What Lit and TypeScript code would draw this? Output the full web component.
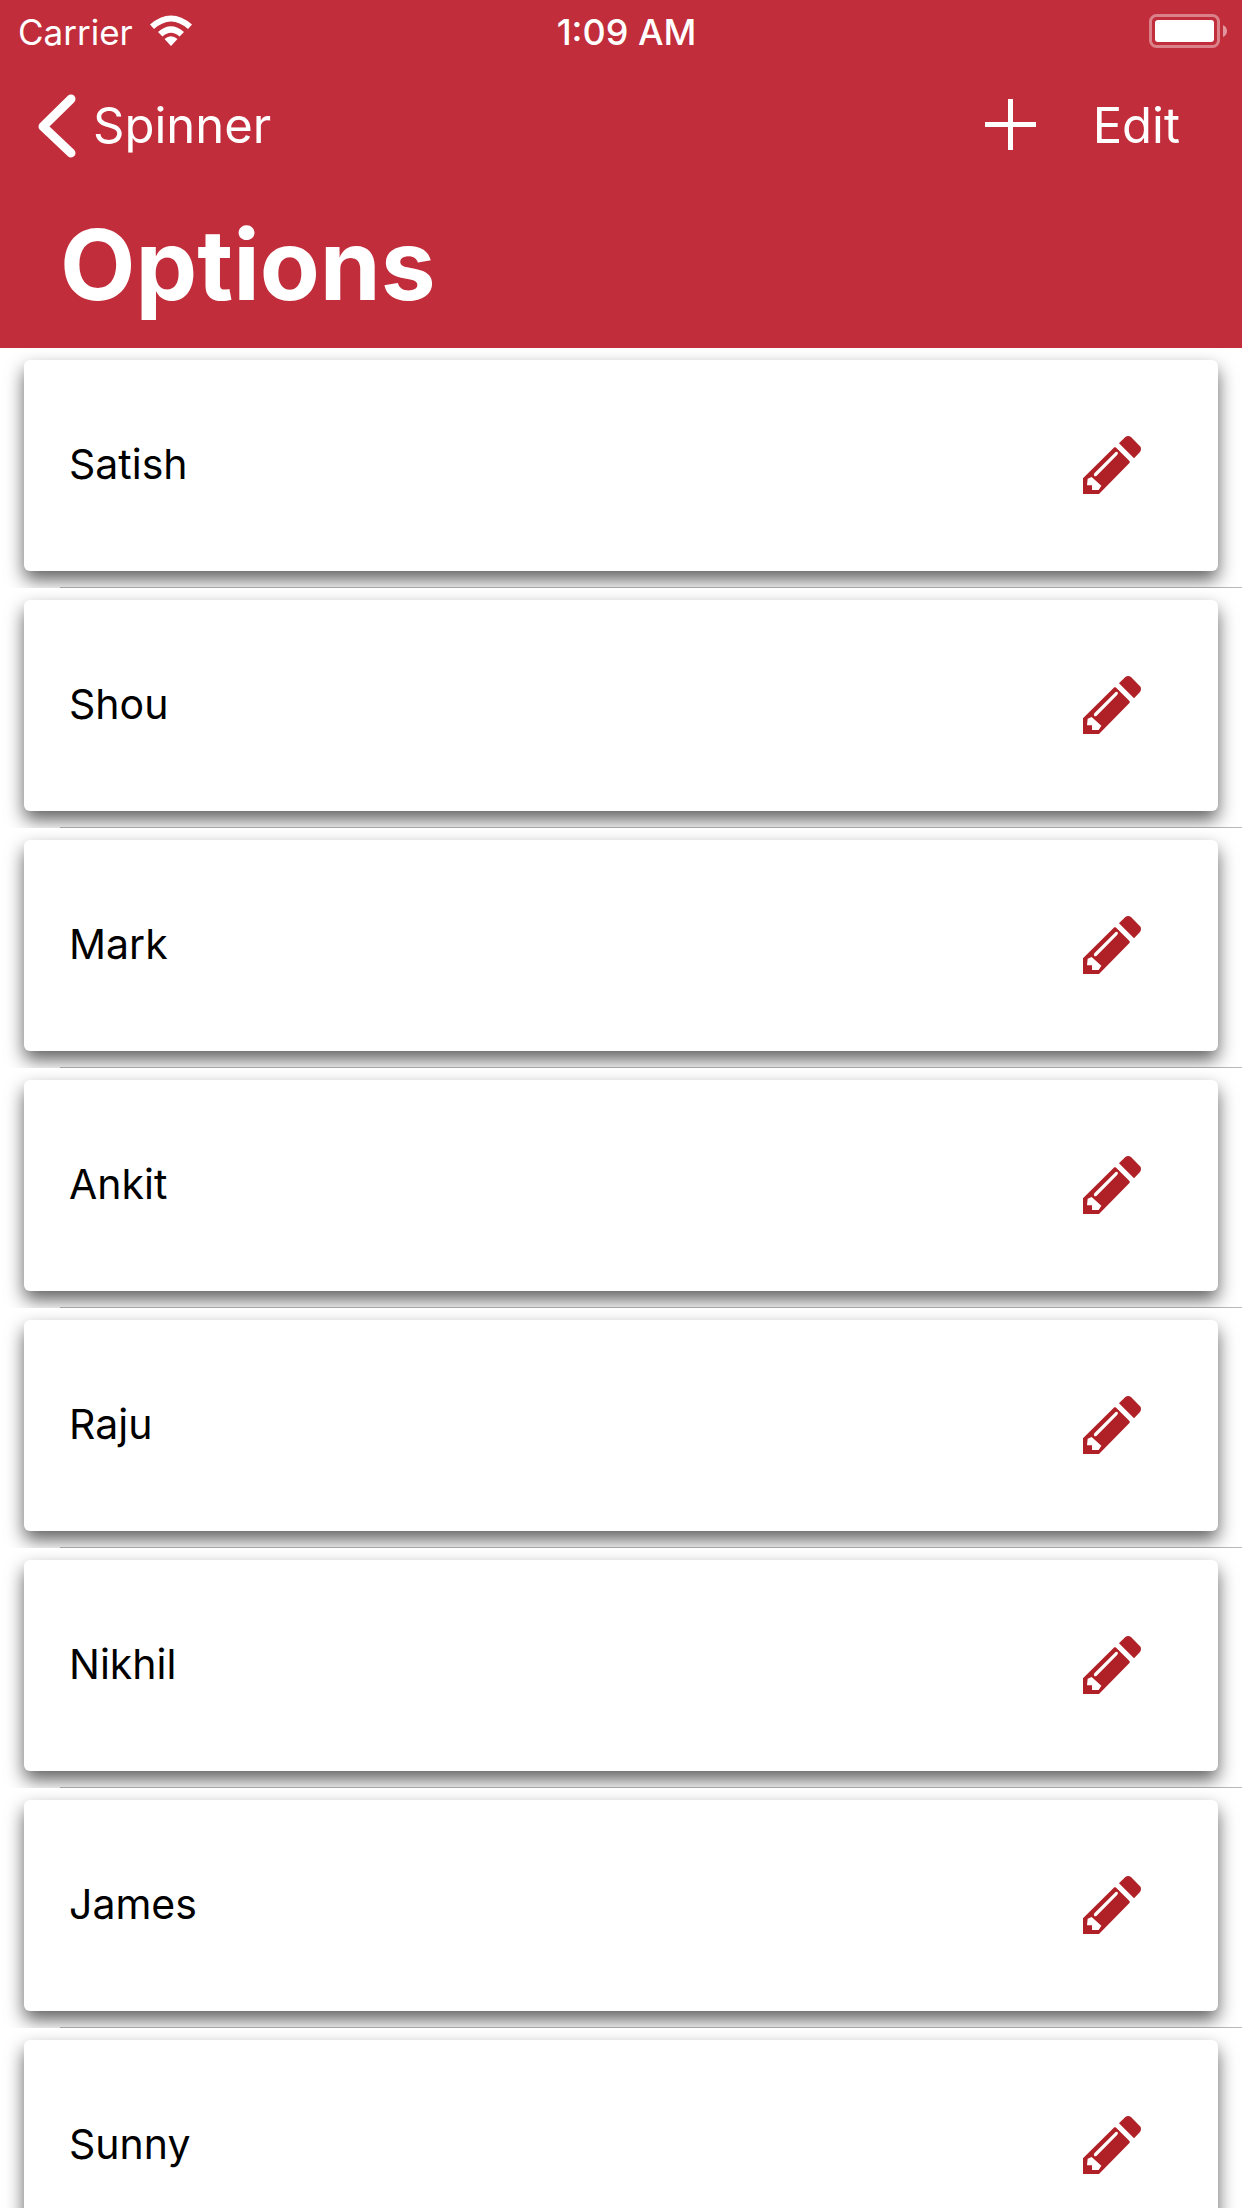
import { LitElement, html, css, svg } from "lit";
import { customElement, property, state } from "lit/decorators.js";

const pencil = html`<svg class="pencil" viewBox="0 0 174 174" aria-hidden="true">
  ${svg`
    <path fill-rule="evenodd" d="M94 34 L98 34 L140 76 L140 80 L48 174 H0 V127 Z
      M26 123 L14 128 L12 148 H27 V162 H47 L55 149 Z
      M98 48 L34 112 Q31 117 34 120 Q37 122 41 119 L103 56 Q106 51 104 49 Q101 46 98 48 Z"/>
    <path d="M108 22 L127 3 Q135 -3 144 3 L171 31 Q177 39 171 48 L153 67 Z"/>`}
</svg>`;

@customElement("status-bar")
export class StatusBar extends LitElement {
  static styles = css`
    :host {
      display: grid;
      grid-template-columns: 1fr auto 1fr;
      align-items: center;
      height: 60px;
      padding: 0 15px 0 18px;
      line-height: 60px;
    }
    .carrier {
      display: flex;
      align-items: center;
      gap: 16px;
      font-size: 35px;
      padding-top: 2px;
    }
    .wifi {
      width: 44px;
      height: 32px;
      margin-bottom: 2px;
    }
    .time {
      font-size: 36px;
      font-weight: 500;
      padding: 2px 0 0 8px;
    }
    .battery {
      justify-self: end;
      width: 78px;
      height: 34px;
    }
  `;

  render() {
    return html`
      <div class="carrier">
        <span>Carrier</span>
        <svg class="wifi" viewBox="0 0 44 32" role="img" aria-label="Wi-Fi">
          <path fill="#fff" d="M1 9.500 Q22 -8.500 43 9.500 L39 14 Q22 -1 5 14 Z" />
          <path fill="#fff" d="M9 17 Q22 5.500 35 17 L30.500 21.500 Q22 14 13.500 21.500 Z" />
          <path fill="#fff" d="M15.500 24 Q22 18.500 28.500 24 L22 31 Z" />
        </svg>
      </div>
      <div class="time">1:09 AM</div>
      <svg class="battery" viewBox="0 0 78 34" role="img" aria-label="Battery full">
        <rect x="1.500" y="1.500" width="68" height="31" rx="6" fill="none" stroke="#fff" stroke-opacity=".4" stroke-width="3" />
        <rect x="6" y="6" width="59" height="22" rx="3" fill="#fff" />
        <path d="M74 11 Q78 13 78 17 Q78 21 74 23 Z" fill="#fff" fill-opacity=".5" />
      </svg>
    `;
  }
}

@customElement("option-card")
export class OptionCard extends LitElement {
  @property() name = "";

  static styles = css`
    :host {
      display: block;
      overflow: hidden;
      position: relative;
      padding: 12px 24px 17px;
    }
    :host::after {
      content: "";
      position: absolute;
      left: 60px;
      right: 0;
      bottom: 0;
      height: 1px;
      background: rgba(60, 60, 67, 0.36);
    }
    .card {
      display: flex;
      align-items: center;
      justify-content: space-between;
      height: 211px;
      padding: 0 61px 2px 45px;
      box-sizing: border-box;
      border-radius: 6px;
      background: #fff;
      box-shadow: 0 9px 18px rgba(0, 0, 0, 0.62);
    }
    .name {
      padding-bottom: 2px;
      font-size: 41px;
      line-height: 52px;
      color: #000;
    }
    .edit {
      display: flex;
      padding: 16px;
      border: 0;
      background: none;
      cursor: pointer;
    }
    .pencil {
      width: 58px;
      height: 58px;
      fill: #af2127;
    }
  `;

  render() {
    return html`
      <div class="card">
        <span class="name">${this.name}</span>
        <button class="edit" type="button" aria-label="Edit ${this.name}">${pencil}</button>
      </div>
    `;
  }
}

@customElement("app-root")
export class AppRoot extends LitElement {
  @state() private names = ["Satish", "Shou", "Mark", "Ankit", "Raju", "Nikhil", "James", "Sunny"];

  static styles = css`
    :host {
      display: flex;
      flex-direction: column;
      height: 100vh;
      overflow: hidden;
      background: #fff;
      font-family: Inter, "Liberation Sans", sans-serif;
    }
    .header {
      flex: none;
      background: #c22d3b;
      color: #fff;
    }
    .nav {
      display: flex;
      align-items: center;
      height: 132px;
      padding: 0 62px 0 38px;
      box-sizing: border-box;
    }
    .back {
      display: flex;
      align-items: center;
      gap: 17px;
      margin-right: auto;
      color: inherit;
      text-decoration: none;
      font-size: 49px;
      line-height: 60px;
    }
    .chevron {
      width: 38px;
      height: 64px;
    }
    .action {
      display: flex;
      align-items: center;
      padding: 0;
      border: 0;
      background: none;
      color: inherit;
      font: inherit;
      font-size: 49px;
      line-height: 60px;
      cursor: pointer;
    }
    .add {
      margin-right: 57px;
      padding-bottom: 3px;
    }
    .plus {
      width: 51px;
      height: 51px;
    }
    .title {
      margin: 0;
      padding: 13px 60px 23px;
      font-size: 98px;
      line-height: 120px;
      font-weight: 700;
    }
    .list {
      flex: 1;
      min-height: 0;
      margin: 0;
      padding: 0;
      list-style: none;
      overflow: hidden;
    }
  `;

  render() {
    return html`
      <header class="header">
        <status-bar></status-bar>
        <nav class="nav">
          <a class="back" href="#spinner">
            <svg class="chevron" viewBox="0 0 38 64" aria-hidden="true">
              <path d="M33 5 L5 32.500 L33 59" fill="none" stroke="#fff" stroke-width="9" stroke-linecap="round" stroke-linejoin="round" />
            </svg>
            <span>Spinner</span>
          </a>
          <button class="action add" type="button" aria-label="Add">
            <svg class="plus" viewBox="0 0 51 51" aria-hidden="true">
              <path d="M25.500 0 V51 M0 25.500 H51" stroke="#fff" stroke-width="5" />
            </svg>
          </button>
          <button class="action" type="button">Edit</button>
        </nav>
        <h1 class="title">Options</h1>
      </header>
      <ul class="list">
        ${this.names.map((name) => html`<li><option-card .name=${name}></option-card></li>`)}
      </ul>
    `;
  }
}
